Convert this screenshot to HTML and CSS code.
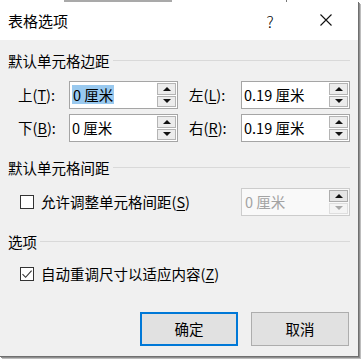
FILE: index.html
```html
<!DOCTYPE html>
<html lang="zh-CN">
<head>
<meta charset="utf-8">
<link rel="stylesheet" href="styles.css">
</head>
<body>
<div class="screen">
  <div class="topstrip"><span class="tab-bar"></span><span class="tab-line"></span></div>
  <div class="dialog">
    <div class="titlebar">
      <span class="title">表格选项</span>
      <span class="cap help">?</span>
      <span class="cap close"><svg width="12" height="12" viewBox="0 0 12 12"><path d="M0.5 0.5 L11.5 11.5 M11.5 0.5 L0.5 11.5" stroke="#111" stroke-width="1.1" fill="none"/></svg></span>
    </div>
    <div class="body">
      <div class="group-head"><span>默认单元格边距</span><i class="rule"></i></div>
      <div class="margins">
        <span class="lbl">上(<u>T</u>):</span>
        <div class="spin"><span class="val"><span class="sel">0 厘米</span></span><span class="btns"><span class="b up"><i></i></span><span class="b down"><i></i></span></span></div>
        <span class="lbl rlbl">左(<u>L</u>):</span>
        <div class="spin"><span class="val">0.19 厘米</span><span class="btns"><span class="b up"><i></i></span><span class="b down"><i></i></span></span></div>
        <span class="lbl">下(<u>B</u>):</span>
        <div class="spin"><span class="val">0 厘米</span><span class="btns"><span class="b up"><i></i></span><span class="b down"><i></i></span></span></div>
        <span class="lbl rlbl">右(<u>R</u>):</span>
        <div class="spin"><span class="val">0.19 厘米</span><span class="btns"><span class="b up"><i></i></span><span class="b down"><i></i></span></span></div>
      </div>
      <div class="group-head gh2"><span>默认单元格间距</span><i class="rule"></i></div>
      <div class="check-row spacing">
        <span class="cb"></span>
        <span class="cb-label">允许调整单元格间距(<u>S</u>)</span>
        <div class="spin disabled"><span class="val">0 厘米</span><span class="btns"><span class="b up"><i></i></span><span class="b down"><i></i></span></span></div>
      </div>
      <div class="group-head gh2"><span>选项</span><i class="rule"></i></div>
      <div class="check-row">
        <span class="cb checked"><svg width="12" height="12" viewBox="0 0 12 12"><path d="M1.5 6.2 L4.6 9.3 L10.6 2.6" stroke="#333" stroke-width="1.1" fill="none"/></svg></span>
        <span class="cb-label">自动重调尺寸以适应内容(<u>Z</u>)</span>
      </div>
      <div class="buttons">
        <span class="btn primary">确定</span>
        <span class="btn">取消</span>
      </div>
    </div>
  </div>
</div>
</body>
</html>
```

FILE: styles.css
```css
* { box-sizing: border-box; }
html, body { margin: 0; padding: 0; }
body {
  background: #ffffff;
  font-family: "Noto Sans CJK SC", "Noto Sans", sans-serif;
  font-size: 14.5px;
  color: #000;
}
.screen {
  width: 361px;
  height: 360px;
  overflow: hidden;
  position: relative;
  background: #fff;
}
.topstrip {
  height: 2px;
  display: flex;
}
.tab-bar {
  display: block;
  margin-left: 64px;
  width: 108px;
  height: 2px;
  background: #a9a9a9;
}
.tab-line {
  display: block;
  margin-left: 114px;
  width: 1px;
  height: 2px;
  background: #777;
}
.dialog {
  width: 359px;
  border-right: 1px solid #6f6f6f;
  border-bottom: 1px solid #6f6f6f;
  box-shadow: 1px 1px 0 #8f8f8f, 2px 2px 0 #bdbdbd;
  background: #f0f0f0;
}
.titlebar {
  height: 38px;
  background: #fff;
  display: flex;
  align-items: center;
  padding-left: 8px;
}
.title {
  font-size: 15px;
  line-height: 20px;
  flex: 1;
  margin-top: -1px;
}
.cap {
  width: 46px;
  height: 38px;
  display: flex;
  align-items: center;
  justify-content: center;
}
.help {
  font-size: 16px;
  font-weight: 300;
  margin-top: -1px;
}
.close { margin-left: 10px; margin-right: 9px; margin-top: -2px; }
.body {
  padding: 11px 8px 10px 8px;
}
.group-head {
  height: 20px;
  display: flex;
  align-items: center;
  line-height: 20px;
}
.group-head .rule {
  flex: 1;
  height: 1px;
  background: #d9d9d9;
  margin-left: 3px;
  margin-top: -1px;
}
.gh2 { margin-top: 16px; }
.margins {
  margin-top: 10px;
  padding-left: 10px;
  display: grid;
  grid-template-columns: 51px 109px 63px 109px;
  grid-auto-rows: 28px;
  row-gap: 5px;
  align-items: center;
}
.lbl { line-height: 20px; margin-top: -1px; }
.rlbl { padding-left: 11px; }
u { text-decoration: underline; text-underline-offset: 2px; text-decoration-thickness: 1px; }
.spin {
  width: 109px;
  height: 28px;
  border: 1px solid #a5a5a5;
  background: #fff;
  display: flex;
  align-items: stretch;
}
.spin .val {
  flex: 1;
  display: flex;
  align-items: center;
  padding-left: 2px;
  line-height: 19px;
  white-space: nowrap;
  margin-top: -1px;
}
.sel {
  background: #99c9ef;
  padding: 0 1px 0 1px;
}
.btns {
  width: 20px;
  display: flex;
  flex-direction: column;
  padding: 1px 1px 1px 0;
  gap: 1px;
}
.b {
  flex: 1;
  background: #ececec;
  border: 1px solid #b4b4b4;
  display: flex;
  align-items: center;
  justify-content: center;
}
.b i {
  width: 0;
  height: 0;
  border-left: 4px solid transparent;
  border-right: 4px solid transparent;
  display: block;
}
.up i { border-bottom: 4px solid #111; }
.down i { border-top: 4px solid #111; }
.check-row {
  margin-top: 8px;
  height: 28px;
  display: flex;
  align-items: center;
  padding-left: 12px;
}
.spacing { margin-top: 10px; }
.cb {
  width: 14px;
  height: 14px;
  border: 1px solid #333;
  background: #fff;
  display: flex;
  align-items: center;
  justify-content: center;
}
.cb-label {
  margin-left: 7px;
  line-height: 20px;
  margin-top: -1px;
  flex: 1;
}
.spin.disabled {
  border-color: #cccccc;
  background: #f9f9f9;
  color: #a3a3a3;
}
.spin.disabled .val { padding-left: 3px; }
.spin.disabled .b.up { background: #e5e5e5; border-color: #adadad; }
.spin.disabled .b.down { background: #f4f4f4; border-color: #dedede; }
.spin.disabled .down i { border-top-color: #a8a8a8; }
.buttons {
  margin-top: 24px;
  display: flex;
  justify-content: flex-end;
  gap: 13px;
  padding-right: 1px;
}
.btn {
  width: 98px;
  height: 34px;
  background: #e1e1e1;
  border: 1px solid #adadad;
  display: flex;
  align-items: center;
  justify-content: center;
  line-height: 20px;
}
.btn.primary {
  border: 2px solid #0078d7;
}
```
